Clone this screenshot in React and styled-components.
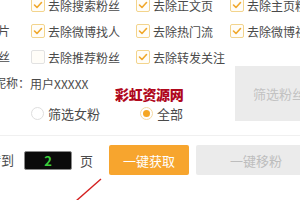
import React from "react";
import styled, { createGlobalStyle } from "styled-components";

const Global = createGlobalStyle`
  html, body { margin: 0; padding: 0; background: #ffffff; overflow: hidden; }
  #root { width: 300px; height: 200px; overflow: hidden; position: relative; }
  * { box-sizing: border-box; }
`;

const Page = styled.div`
  margin: -4px 0 0 -70px;
  display: flex;
  flex-direction: column;
  font-family: "Noto Sans CJK SC", "Noto Sans", sans-serif;
  color: #4a4a4a;
  width: 500px;
`;

const Rows = styled.div`
  display: flex;
  flex-direction: column;
  gap: 8px;
`;

const Row = styled.div`
  display: flex;
  align-items: center;
  height: 18px;
  font-size: 12px;
  white-space: nowrap;
`;

const Label = styled.div`
  width: ${(p) => p.$w}px;
  margin-right: ${(p) => p.$gap || 0}px;
  text-align: right;
  font-size: ${(p) => p.$size || 12}px;
  flex-shrink: 0;
  line-height: 18px;
`;

const CheckGrid = styled.div`
  display: grid;
  grid-template-columns: 105px 94px 120px;
  align-items: center;
`;

const CheckItem = styled.label`
  display: flex;
  align-items: center;
  gap: 3px;
  font-size: 12px;
`;

const Box = styled.span`
  width: 14px;
  height: 14px;
  border: 1px solid ${(p) => (p.$on ? "#f3d48c" : "#e2e2e2")};
  border-radius: 2px;
  background: #fffdf8;
  display: flex;
  align-items: center;
  justify-content: center;
  flex-shrink: 0;
`;

const Check = ({ on, text }) => (
  <CheckItem>
    <Box $on={on}>
      {on && (
        <svg width="10" height="10" viewBox="0 0 10 10">
          <path d="M1.5 5 L4 7.5 L8.5 2.5" fill="none" stroke="#f0a82c" strokeWidth="1.6" strokeLinecap="round" strokeLinejoin="round" />
        </svg>
      )}
    </Box>
    {text}
  </CheckItem>
);

const Block = styled.div`
  display: flex;
  align-items: stretch;
  height: 55px;
`;

const LeftCol = styled.div`
  width: 305px;
  padding-top: 8px;
  display: flex;
  flex-direction: column;
  gap: 12px;
`;

const FilterButton = styled.div`
  width: 120px;
  background: #ebebeb;
  color: #c2c2c2;
  font-size: 13px;
  display: flex;
  align-items: center;
  padding-left: 18px;
`;

const RadioRow = styled.div`
  display: flex;
  align-items: center;
  height: 18px;
  padding-left: 101px;
  font-size: 13px;
`;

const RadioItem = styled.label`
  display: flex;
  align-items: center;
  gap: 4px;
  width: ${(p) => p.$w || "auto"};
`;

const RadioCircle = styled.span`
  width: 13px;
  height: 13px;
  border-radius: 50%;
  border: 1px solid ${(p) => (p.$on ? "#f6d9a2" : "#dedede")};
  background: #fff;
  display: flex;
  align-items: center;
  justify-content: center;
  &::after {
    content: "";
    display: ${(p) => (p.$on ? "block" : "none")};
    width: 7px;
    height: 7px;
    border-radius: 50%;
    background: #f5a623;
  }
`;

const Separator = styled.div`
  height: 1px;
  background: #f0f0f0;
  margin-top: 14px;
`;

const ActionRow = styled.div`
  display: flex;
  align-items: center;
  height: 30px;
  margin-top: 9px;
  font-size: 13px;
  white-space: nowrap;
`;

const PageInput = styled.div`
  width: 48px;
  height: 19px;
  background: #0b0b0b;
  border: 1px solid #8a8a8a;
  border-radius: 2px;
  color: #3ccf3c;
  font-weight: 700;
  font-size: 13px;
  display: flex;
  align-items: center;
  justify-content: center;
  margin-right: 8px;
`;

const Unit = styled.span`
  margin-right: 16px;
`;

const Button = styled.div`
  width: ${(p) => p.$w}px;
  height: 30px;
  border-radius: 2px;
  background: ${(p) => (p.$primary ? "#f7a52e" : "#ebebeb")};
  color: ${(p) => (p.$primary ? "#ffffff" : "#bdbdbd")};
  font-size: 13px;
  display: flex;
  align-items: center;
  justify-content: center;
  margin-right: 7px;
  flex-shrink: 0;
`;

const Watermark = styled.div`
  position: absolute;
  left: 115px;
  top: 85px;
  font-family: "Noto Sans CJK SC", sans-serif;
  font-weight: 900;
  font-size: 14px;
  line-height: 18px;
  color: #b0081c;
  letter-spacing: -0.3px;
`;

const Annotation = styled.svg`
  position: absolute;
  left: 0;
  top: 0;
  pointer-events: none;
`;

export default function App() {
  return (
    <>
      <Global />
      <Page>
        <Rows>
          <Row>
            <Label $w={80} $gap={21}></Label>
            <CheckGrid>
              <Check on text="去除搜索粉丝" />
              <Check on text="去除正文页" />
              <Check on text="去除主页粉丝" />
            </CheckGrid>
          </Row>
          <Row>
            <Label $w={80} $gap={21}>去除图片</Label>
            <CheckGrid>
              <Check on text="去除微博找人" />
              <Check on text="去除热门流" />
              <Check on text="去除微博视频" />
            </CheckGrid>
          </Row>
          <Row>
            <Label $w={80} $gap={21}>去除粉丝</Label>
            <CheckGrid>
              <Check text="去除推荐粉丝" />
              <Check on text="去除转发关注" />
            </CheckGrid>
          </Row>
        </Rows>
        <Block>
          <LeftCol>
            <Row>
              <Label $w={100}>用户昵称：</Label>
              <span>用户XXXXX</span>
            </Row>
            <RadioRow>
              <RadioItem $w="109px">
                <RadioCircle />
                筛选女粉
              </RadioItem>
              <RadioItem>
                <RadioCircle $on />
                全部
              </RadioItem>
            </RadioRow>
          </LeftCol>
          <FilterButton>筛选粉丝</FilterButton>
        </Block>
        <Separator />
        <ActionRow>
          <Label $w={84} $gap={10} $size={13}>跳转到</Label>
          <PageInput>2</PageInput>
          <Unit>页</Unit>
          <Button $w={80} $primary>一键获取</Button>
          <Button $w={120}>一键移粉</Button>
        </ActionRow>
      </Page>
      <Watermark>彩虹资源网</Watermark>
      <Annotation width="300" height="200" viewBox="0 0 300 200">
        <line x1="101" y1="179" x2="76" y2="201" stroke="#d42020" strokeWidth="1.4" />
      </Annotation>
    </>
  );
}
